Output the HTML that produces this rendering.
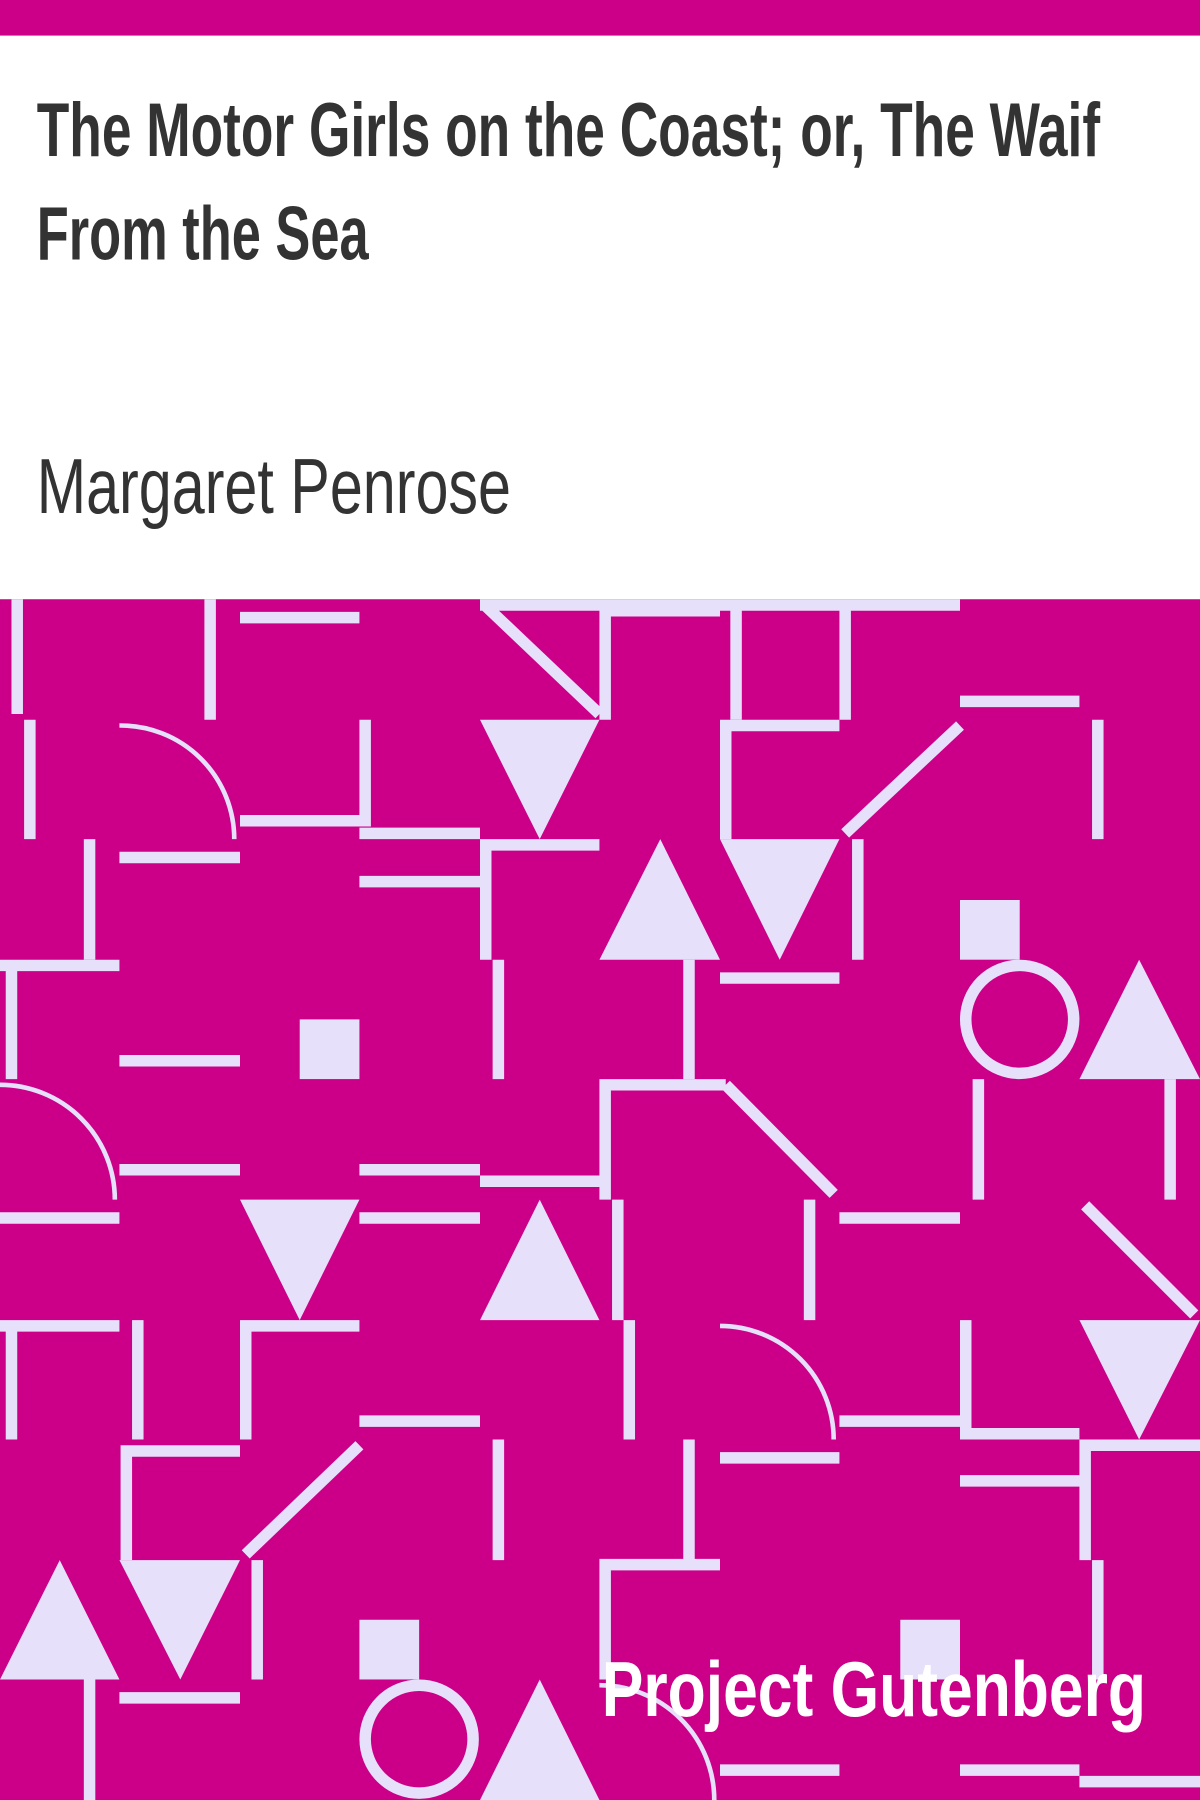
<!DOCTYPE html>
<html><head><meta charset="utf-8"><style>
html,body{margin:0;padding:0;background:#fff;}
svg{display:block;}
</style></head><body>
<svg width="1200" height="1800" viewBox="0 0 1045 1568" preserveAspectRatio="none" xmlns="http://www.w3.org/2000/svg">
<rect x="0" y="0" width="1045" height="1568" fill="#fff"/>
<rect x="0" y="0" width="1045" height="31" fill="#cc0088"/>
<rect x="0" y="522" width="1045" height="1046" fill="#cc0088"/>
<g font-family="'Liberation Sans',sans-serif" fill="#333">
<text x="32" y="136" font-size="66" font-weight="bold" textLength="926" lengthAdjust="spacingAndGlyphs">The Motor Girls on the Coast; or, The Waif</text>
<text x="32" y="226" font-size="66" font-weight="bold" textLength="289" lengthAdjust="spacingAndGlyphs">From the Sea</text>
</g>
<text x="32" y="447" font-family="'Liberation Sans Narrow','Liberation Sans',sans-serif" font-size="68" fill="#333" textLength="413" lengthAdjust="spacingAndGlyphs">Margaret Penrose</text>
<g stroke="#e6e0fa" stroke-width="10" fill="none" stroke-linecap="butt">
<path d="M15 522V622M183 522V627M209 538H313M418 527H836M422 527L522 622M527 627V532H627M641 522V627M736 627V532M836 611H940"/>
<path d="M26 627V731M318 627V720M209 715H318M313 726H418M632 731V632H731M836 632L736 726M956 627V731"/>
<path d="M78 731V836M104 747H209M313 768H418M423 836V736H522M747 731V836"/>
<path d="M0 841H104M10 841V940M434 836V940M104 924H209M600 836V940M627 852H731"/>
<path d="M104 1019H209M313 1019H418M418 1029H522M527 1045V945H632M632 945L726 1040M852 940V1045M1019 940V1045"/>
<path d="M0 1061H104M313 1061H418M538 1045V1150M705 1045V1150M731 1061H836M945 1050L1040 1145"/>
<path d="M0 1155H104M10 1155V1254M120 1150V1254M214 1254V1155H313M313 1238H418M548 1150V1254M841 1150V1249H940"/>
<path d="M110 1359V1264H209M313 1259L214 1354M434 1254V1359M600 1254V1359M627 1270H731M731 1238H836M836 1290H940M945 1359V1259H1045"/>
<path d="M224 1359V1463M522 1363H627M527 1363V1463M956 1359V1463"/>
<path d="M78 1463V1568M104 1479H209M627 1542H731M836 1542H940M940 1552H1045"/>
<circle cx="888" cy="888" r="47"/>
<circle cx="365" cy="1515" r="47"/>
</g>
<g stroke="#e6e0fa" stroke-width="4" fill="none">
<path d="M104 632A99 99 0 0 1 204 731"/>
<path d="M0 945A100 100 0 0 1 100 1045"/>
<path d="M627 1155A99 99 0 0 1 726 1254"/>
<path d="M522 1468A100 100 0 0 1 622 1568"/>
</g>
<g fill="#e6e0fa">
<polygon points="418,627 522,627 470,731"/>
<polygon points="522,836 627,836 575,731"/>
<polygon points="627,731 731,731 679,836"/>
<rect x="836" y="784" width="52" height="52"/>
<rect x="261" y="888" width="52" height="52"/>
<polygon points="940,940 1045,940 992,836"/>
<polygon points="209,1045 313,1045 261,1150"/>
<polygon points="418,1150 522,1150 470,1045"/>
<polygon points="940,1150 1045,1150 992,1254"/>
<polygon points="0,1463 104,1463 52,1359"/>
<polygon points="104,1359 209,1359 157,1463"/>
<rect x="313" y="1411" width="52" height="52"/>
<rect x="784" y="1411" width="52" height="52"/>
<polygon points="418,1568 522,1568 470,1463"/>
</g>
<text x="524" y="1495" font-family="'Liberation Sans',sans-serif" font-weight="bold" font-size="68" fill="#fff" textLength="474" lengthAdjust="spacingAndGlyphs">Project Gutenberg</text>
</svg>
</body></html>
